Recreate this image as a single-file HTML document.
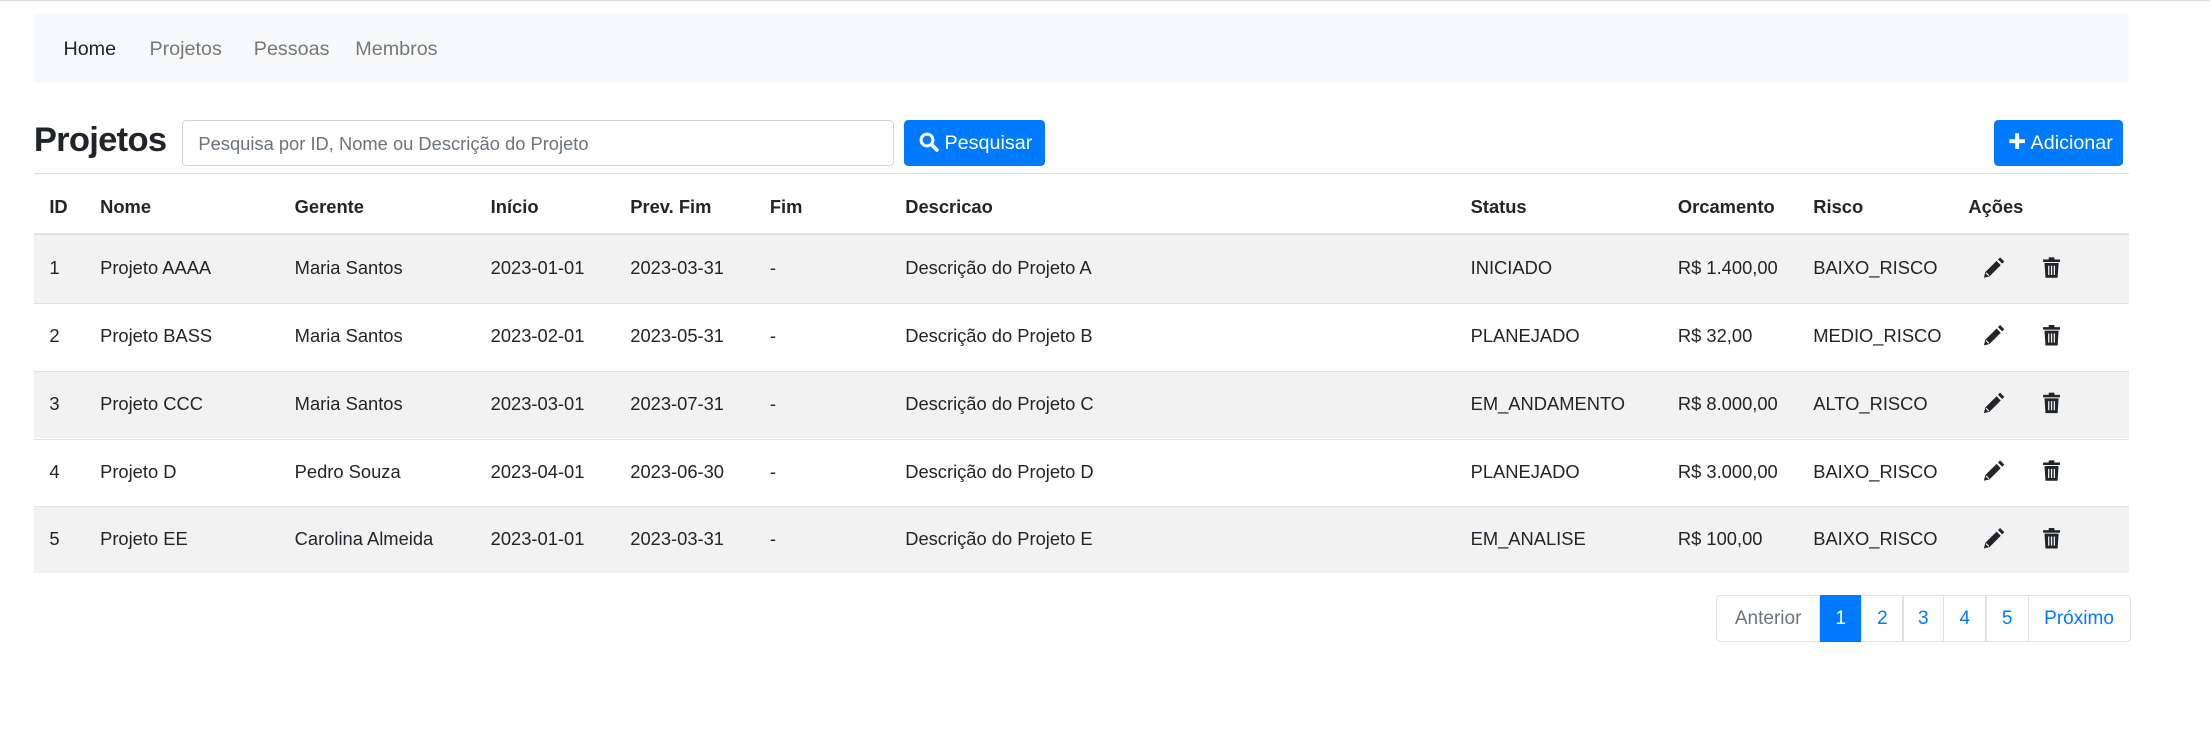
<!DOCTYPE html>
<html><head><meta charset="utf-8"><style>
html,body{margin:0;padding:0;background:#fff;overflow:hidden}
body{width:1568px;height:522px;zoom:1.41;position:relative;font-family:"Liberation Sans",sans-serif;color:#212529;font-size:14px}
.a{position:absolute;white-space:nowrap}
.topline{position:absolute;left:0;top:0;width:1568px;height:1px;background:#dcdcdc}
.nav{position:absolute;left:24px;top:10px;width:1486px;height:49px;background:#f8f9fa}
.nav span{position:absolute;top:17px;font-size:14px;color:#777}
.row{position:absolute;left:24px;width:1486px;height:47px;border-top:1px solid #dee2e6}
.g{background:#f2f2f2}
.c{position:absolute;top:15px;font-size:13px}
.btn{position:absolute;top:85px;height:33px;background:#007bff;border-radius:3px;color:#fff;font-size:14px;line-height:33px;box-sizing:border-box}
.pg{position:absolute;top:422px;height:33px;line-height:33px;text-align:center;border:1px solid #dee2e6;box-sizing:border-box;color:#007bff;font-size:13.5px;margin-left:-1px}
</style></head><body>
<div class="topline"></div>
<div class="nav">
<span style="left:21px;color:#212529">Home</span>
<span style="left:82px">Projetos</span>
<span style="left:156px">Pessoas</span>
<span style="left:228px">Membros</span>
</div>
<div class="a" style="left:24px;top:86px;font-size:24.5px;font-weight:bold;letter-spacing:-0.5px">Projetos</div>
<div class="a" style="left:129px;top:85px;width:505px;height:33px;border:1px solid #ced4da;border-radius:3px;box-sizing:border-box;padding-left:11px;line-height:33px;color:#6c757d;font-size:13px">Pesquisa por ID, Nome ou Descrição do Projeto</div>
<div class="btn" style="left:641px;width:100px;padding-left:11px"><svg width="14" height="14" viewBox="0 0 16 16" style="vertical-align:-2px"><circle cx="6.5" cy="6.5" r="4.8" fill="none" stroke="#fff" stroke-width="2.4"/><path d="M10 10l4.5 4.5" stroke="#fff" stroke-width="3" stroke-linecap="round"/></svg> Pesquisar</div>
<div class="btn" style="left:1414px;width:92px;padding-left:10px"><svg width="13" height="13" viewBox="0 0 14 14" style="vertical-align:-1px"><path d="M7 1v12M1 7h12" stroke="#fff" stroke-width="3"/></svg> Adicionar</div>
<div class="row" style="top:123px;height:42px;font-weight:bold">
<span class="c" style="left:11px">ID</span><span class="c" style="left:47px">Nome</span><span class="c" style="left:185px">Gerente</span><span class="c" style="left:324px">Início</span><span class="c" style="left:423px">Prev. Fim</span><span class="c" style="left:522px">Fim</span><span class="c" style="left:618px">Descricao</span><span class="c" style="left:1019px">Status</span><span class="c" style="left:1166px">Orcamento</span><span class="c" style="left:1262px">Risco</span><span class="c" style="left:1372px">Ações</span>
</div>
<div class="a" style="left:24px;top:165px;width:1486px;height:2px;background:#dee2e6"></div>
<div class="row g" style="top:167px;border-top:none;height:48px">
<span class="c" style="left:11px">1</span><span class="c" style="left:47px">Projeto AAAA</span><span class="c" style="left:185px">Maria Santos</span><span class="c" style="left:324px">2023-01-01</span><span class="c" style="left:423px">2023-03-31</span><span class="c" style="left:522px">-</span><span class="c" style="left:618px">Descrição do Projeto A</span><span class="c" style="left:1019px">INICIADO</span><span class="c" style="left:1166px">R$ 1.400,00</span><span class="c" style="left:1262px">BAIXO_RISCO</span>
</div>
<div class="row" style="top:215px">
<span class="c" style="left:11px">2</span><span class="c" style="left:47px">Projeto BASS</span><span class="c" style="left:185px">Maria Santos</span><span class="c" style="left:324px">2023-02-01</span><span class="c" style="left:423px">2023-05-31</span><span class="c" style="left:522px">-</span><span class="c" style="left:618px">Descrição do Projeto B</span><span class="c" style="left:1019px">PLANEJADO</span><span class="c" style="left:1166px">R$ 32,00</span><span class="c" style="left:1262px">MEDIO_RISCO</span>
</div>
<div class="row g" style="top:263px">
<span class="c" style="left:11px">3</span><span class="c" style="left:47px">Projeto CCC</span><span class="c" style="left:185px">Maria Santos</span><span class="c" style="left:324px">2023-03-01</span><span class="c" style="left:423px">2023-07-31</span><span class="c" style="left:522px">-</span><span class="c" style="left:618px">Descrição do Projeto C</span><span class="c" style="left:1019px">EM_ANDAMENTO</span><span class="c" style="left:1166px">R$ 8.000,00</span><span class="c" style="left:1262px">ALTO_RISCO</span>
</div>
<div class="row" style="top:311px">
<span class="c" style="left:11px">4</span><span class="c" style="left:47px">Projeto D</span><span class="c" style="left:185px">Pedro Souza</span><span class="c" style="left:324px">2023-04-01</span><span class="c" style="left:423px">2023-06-30</span><span class="c" style="left:522px">-</span><span class="c" style="left:618px">Descrição do Projeto D</span><span class="c" style="left:1019px">PLANEJADO</span><span class="c" style="left:1166px">R$ 3.000,00</span><span class="c" style="left:1262px">BAIXO_RISCO</span>
</div>
<div class="row g" style="top:359px">
<span class="c" style="left:11px">5</span><span class="c" style="left:47px">Projeto EE</span><span class="c" style="left:185px">Carolina Almeida</span><span class="c" style="left:324px">2023-01-01</span><span class="c" style="left:423px">2023-03-31</span><span class="c" style="left:522px">-</span><span class="c" style="left:618px">Descrição do Projeto E</span><span class="c" style="left:1019px">EM_ANALISE</span><span class="c" style="left:1166px">R$ 100,00</span><span class="c" style="left:1262px">BAIXO_RISCO</span>
</div>
<svg class="a" style="left:0;top:0" width="1568" height="420">
<defs>
<g id="pen"><path d="M1 15l1-4 8-8 3 3-8 8z" fill="#212529"/><path d="M11 2l1.5-1.5 3 3L14 5z" fill="#212529"/><path d="M2.5 11.5l2 2" stroke="#fff" stroke-width="0.8"/></g>
<g id="tr"><rect x="0" y="2" width="12" height="1.8" fill="#212529"/><rect x="4" y="0.5" width="4" height="2" fill="#212529"/><path d="M1 4.5h10l-0.7 10.5h-8.6z" fill="#212529"/><path d="M4 6.5v6.5M6 6.5v6.5M8 6.5v6.5" stroke="#f2f2f2" stroke-width="0.9"/></g>
</defs>
<use href="#pen" x="1406" y="182"/><use href="#tr" x="1449" y="182"/>
<use href="#pen" x="1406" y="230"/><use href="#tr" x="1449" y="230"/>
<use href="#pen" x="1406" y="278"/><use href="#tr" x="1449" y="278"/>
<use href="#pen" x="1406" y="326"/><use href="#tr" x="1449" y="326"/>
<use href="#pen" x="1406" y="374"/><use href="#tr" x="1449" y="374"/>
</svg>
<div class="pg" style="left:1218px;width:74px;color:#6c757d;border-radius:3px 0 0 3px">Anterior</div>
<div class="pg" style="left:1292px;width:29px;background:#007bff;border-color:#007bff;color:#fff">1</div>
<div class="pg" style="left:1321px;width:30px">2</div>
<div class="pg" style="left:1350px;width:30px">3</div>
<div class="pg" style="left:1379px;width:31px">4</div>
<div class="pg" style="left:1409px;width:31px">5</div>
<div class="pg" style="left:1439px;width:73px;border-radius:0 3px 3px 0">Próximo</div>
</body></html>
